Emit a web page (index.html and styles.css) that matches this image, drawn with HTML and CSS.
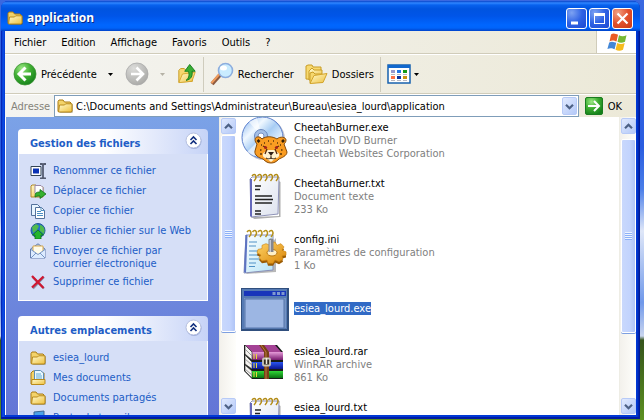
FILE: index.html
```html
<!DOCTYPE html>
<html lang="fr">
<head>
<meta charset="utf-8">
<title>application</title>
<link rel="stylesheet" href="styles.css">
</head>
<body>
<svg class="defs" width="0" height="0" aria-hidden="true">
  <defs>
    <linearGradient id="gFolder" x1="0" y1="0" x2="1" y2="1"><stop offset="0" stop-color="#fffbd0"/><stop offset="1" stop-color="#eebf3c"/></linearGradient>
    <radialGradient id="gGreen" cx=".35" cy=".25" r=".8"><stop offset="0" stop-color="#9be884"/><stop offset=".5" stop-color="#3fae32"/><stop offset="1" stop-color="#14801a"/></radialGradient>
    <radialGradient id="gGrey" cx=".35" cy=".25" r=".8"><stop offset="0" stop-color="#dcdcda"/><stop offset="1" stop-color="#a9a9a6"/></radialGradient>
    <linearGradient id="gDisc" x1="0" y1="0" x2="1" y2="1"><stop offset="0" stop-color="#7fb0ee"/><stop offset=".3" stop-color="#f0f8ff"/><stop offset=".5" stop-color="#a8cdf4"/><stop offset=".75" stop-color="#e8f4ff"/><stop offset="1" stop-color="#6f9ee0"/></linearGradient>
    <linearGradient id="gPage" x1="0" y1="0" x2="1" y2="1"><stop offset="0" stop-color="#ffffff"/><stop offset="1" stop-color="#dde2ee"/></linearGradient>
    <linearGradient id="gPageBlue" x1="0" y1="0" x2="1" y2="1"><stop offset="0" stop-color="#ffffff"/><stop offset="1" stop-color="#b5e4f6"/></linearGradient>
    <linearGradient id="gGear" x1="0" y1="0" x2="1" y2="1"><stop offset="0" stop-color="#ffd467"/><stop offset="1" stop-color="#d98508"/></linearGradient>
    <linearGradient id="gPurple" x1="0" y1="0" x2="0" y2="1"><stop offset="0" stop-color="#e69bd9"/><stop offset="1" stop-color="#76196d"/></linearGradient>
    <linearGradient id="gBlue" x1="0" y1="0" x2="0" y2="1"><stop offset="0" stop-color="#2a55f0"/><stop offset="1" stop-color="#0a1590"/></linearGradient>
    <linearGradient id="gBookGreen" x1="0" y1="0" x2="0" y2="1"><stop offset="0" stop-color="#2fd636"/><stop offset="1" stop-color="#087010"/></linearGradient>
    <symbol id="folder" viewBox="0 0 16 16">
      <path d="M2 15h13l1-1V6z" fill="#6b5a20" opacity=".45"/>
      <path d="M1 13.500V3.500l1-1.500h4l1.500 2H13l1 1v8.500z" fill="#f3d36a" stroke="#a97b14"/>
      <path d="M1.500 14l1-7h5l1.200-1.200h6.300V13l-1 1z" fill="url(#gFolder)" stroke="#b98a1c"/>
    </symbol>
    <symbol id="chevrons" viewBox="0 0 17 17">
      <circle cx="9" cy="9.500" r="7.500" fill="#6c80bd" opacity=".5"/>
      <circle cx="8.500" cy="8.500" r="7.500" fill="#fff" stroke="#b5bfde"/>
      <path d="M5.500 8l3-3 3 3M5.500 12l3-3 3 3" fill="none" stroke="#12307f" stroke-width="1.600"/>
    </symbol>
    <symbol id="up" viewBox="0 0 9 9"><path d="M1 6.200l3.500-3.500L8 6.200" fill="none" stroke="#4d6185" stroke-width="2.200"/></symbol>
    <symbol id="down" viewBox="0 0 9 9"><path d="M1 2.800l3.500 3.500L8 2.800" fill="none" stroke="#4d6185" stroke-width="2.200"/></symbol>
    <symbol id="caret" viewBox="0 0 5 3"><path d="M0 0h5L2.500 3z" fill="currentColor"/></symbol>
    <symbol id="notepad" viewBox="0 0 48 48">
      <path d="M10 45l28-1V9l1.500 1v35l-26 2z" fill="#777" opacity=".6"/>
      <path d="M9 7l2-2 27 0-1 37-27 3z" fill="url(#gPage)" stroke="#8f93b8"/>
      <path d="M9 7v37l2 1V7z" fill="#6468bb"/>
      <path d="M14 14h6M14 17.500h5M14 24h17M14 27.500h18M14 31h17M14 39h6M14 42h6" stroke="#222" stroke-width="1.400"/>
      <g fill="none" stroke="#b28b16" stroke-width="1.500"><path d="M11 4c3-4 6 1 2 5M16.500 4c3-4 6 1 2 5M22 4c3-4 6 1 2 5M27.500 4c3-4 6 1 2 5M33 4c3-4 6 1 2 5"/></g>
    </symbol>
  </defs>
</svg>

<div class="window">
  <header class="titlebar">
    <svg class="i16" aria-hidden="true"><use href="#folder"/></svg>
    <h1>application</h1>
    <button class="cap" aria-label="Réduire"><svg viewBox="0 0 19 19"><path d="M4 12.500h7v3H4z" fill="#fff"/></svg></button>
    <button class="cap" aria-label="Agrandir"><svg viewBox="0 0 19 19"><path d="M4 4h11v11H4zM5 7v7h9V7z" fill="#fff" fill-rule="evenodd"/></svg></button>
    <button class="cap close" aria-label="Fermer"><svg viewBox="0 0 19 19"><path d="M4.500 4.500l10 10M14.500 4.500l-10 10" stroke="#fff" stroke-width="2.200"/></svg></button>
  </header>

  <div class="menurow">
    <nav class="menu">
      <button>Fichier</button><button>Edition</button><button>Affichage</button><button>Favoris</button><button>Outils</button><button>?</button>
    </nav>
    <div class="brand">
      <svg viewBox="0 0 20 18" width="20" height="18" aria-hidden="true">
        <path d="M4 1.500c3-2 5 0 7 .2L9.500 8.500c-2-.4-4-1.800-7 0z" fill="#ea5a23"/>
        <path d="M12 2.300c3 1.500 5 1 7.500 0L18 8.800c-3 1.300-5 1.200-7.500 0z" fill="#76b833"/>
        <path d="M2.200 9.500c3-1.800 5-.2 7 .2l-1.600 6.600c-2-.8-4-1.800-7.200-.2z" fill="#4387d6"/>
        <path d="M10.200 10c2.500 1.200 5 1.200 7.500 0L16 16.800c-2.800 1.300-5 1.100-7.500 0z" fill="#f6bb1e"/>
      </svg>
    </div>
  </div>

  <div class="toolbar">
    <button class="tool">
      <svg viewBox="0 0 24 24" width="24" height="24" aria-hidden="true"><circle cx="12" cy="12" r="11" fill="url(#gGreen)" stroke="#3d9434" stroke-width=".8"/><path d="M12.500 5.500L6 12l6.500 6.500M6.500 12H18" fill="none" stroke="#fff" stroke-width="3"/></svg>
      <span>Précédente</span>
    </button>
    <button class="drop" aria-label="Historique précédent"><svg class="caret"><use href="#caret"/></svg></button>
    <button class="tool" aria-label="Suivante"><svg viewBox="0 0 24 24" width="24" height="24"><circle cx="12" cy="12" r="11" fill="url(#gGrey)" stroke="#aaa" stroke-width=".8"/><path d="M11.500 5.500L18 12l-6.500 6.500M17.500 12H6" fill="none" stroke="#fff" stroke-width="2.600"/></svg></button>
    <button class="drop off" aria-label="Historique suivant"><svg class="caret"><use href="#caret"/></svg></button>
    <button class="tool" aria-label="Dossier parent"><svg viewBox="0 0 22 24" width="20" height="24">
      <path d="M2 21V8l2-2h4l2 2h7v12z" fill="#f5d76e" stroke="#c5961d"/>
      <path d="M2 21.500L6 12l14-2-3.500 10z" fill="url(#gFolder)" stroke="#d5a62a"/>
      <path d="M10 19c4-3 3.500-7 2.500-10H8.500L14 1.500 20 9h-3.500c1 5-1 9-6.500 10z" fill="#39ae34" stroke="#157b1a"/>
    </svg></button>
    <span class="sep"></span>
    <button class="tool"><svg viewBox="0 0 24 24" width="24" height="24" aria-hidden="true">
      <path d="M2 22l8-9" stroke="#8d5b41" stroke-width="4"/><path d="M1.500 21l8-9" stroke="#ef9a5b" stroke-width="2"/>
      <circle cx="15.500" cy="8.500" r="7" fill="#c9ecff" stroke="#8daede" stroke-width="1.600"/><ellipse cx="13.500" cy="6" rx="3.500" ry="2.500" fill="#fff"/>
    </svg><span>Rechercher</span></button>
    <button class="tool folders"><svg viewBox="0 0 24 24" width="24" height="24" aria-hidden="true">
      <path d="M2 17V4l2-1h4l1 2h8v13z" fill="#f7d970" stroke="#c99d25"/>
      <path d="M5 18V9l3-3 2 2h8v9z" fill="url(#gFolder)" stroke="#c99d25"/>
      <path d="M6 21V11l3-1 2 2h7v8z" fill="#f5d76e" stroke="#c99d25"/>
      <path d="M6 21.500l4-8 13-2-4 9z" fill="url(#gFolder)" stroke="#d3a52c"/>
    </svg><span>Dossiers</span></button>
    <span class="sep"></span>
    <button class="tool views" aria-label="Affichage"><svg viewBox="0 0 24 20" width="24" height="20">
      <rect x="1" y="1" width="22" height="18" fill="#fff" stroke="#1762ae" stroke-width="1.500"/><path d="M1 1h22v3H1z" fill="#1268cd"/>
      <path d="M4 6h4v3H4z" fill="#99c"/><path d="M10 6h4v3h-4z" fill="#2878e6"/><path d="M16 6h4v3h-4z" fill="#159a19"/>
      <path d="M4 12h4v3H4z" fill="#ff7043"/><path d="M10 12h4v3h-4z" fill="#10349b"/><path d="M16 12h4v3h-4z" fill="#c9920e"/>
      <path d="M4 10.500h4M10 10.500h4M16 10.500h4M4 16.500h4M10 16.500h4M16 16.500h4" stroke="#b8b8c0"/>
    </svg><svg class="caret"><use href="#caret"/></svg></button>
  </div>

  <form class="address">
    <label for="path">Adresse</label>
    <div class="combo">
      <svg class="i16" aria-hidden="true"><use href="#folder"/></svg>
      <input id="path" type="text" value="C:\Documents and Settings\Administrateur\Bureau\esiea_lourd\application">
      <button type="button" class="sbtn" aria-label="Dérouler"><svg width="9" height="9"><use href="#down"/></svg></button>
    </div>
    <button type="button" class="go"><svg viewBox="0 0 18 18" width="18" height="18" aria-hidden="true"><rect x=".5" y=".5" width="17" height="17" rx="1.500" fill="url(#gGreen)" stroke="#1a7c20"/><path d="M9 4l5 5-5 5M13.500 9H3" fill="none" stroke="#fff" stroke-width="2"/></svg><span>OK</span></button>
  </form>

  <main class="content">
    <aside class="side">
      <section class="box">
        <h2><span>Gestion des fichiers</span><button aria-label="Réduire"><svg width="17" height="17"><use href="#chevrons"/></svg></button></h2>
        <ul>
          <li><a href="#"><svg class="i16" viewBox="0 0 16 16"><path d="M1 3.500h10v9H1z" fill="#fff" stroke="#345"/><path d="M3 5.500h6v5H3z" fill="#0a32b4"/><path d="M10 1h2l1 1 1-1h2M13 2v12M10 15.500h2l1-1.500 1 1.500h2" fill="none" stroke="#555d72" stroke-width="1.800"/></svg><span>Renommer ce fichier</span></a></li>
          <li><a href="#"><svg class="i16" viewBox="0 0 16 16"><path d="M1 14V3l1-1h4l2 2h5v10z" fill="url(#gFolder)" stroke="#b18828"/><path d="M5 2.500h6l2 2v6H5z" fill="#fff" stroke="#98a"/><path d="M5 14c0-4 1-5 5-5V6.500l6 4.500-6 4.500V13c-2 0-3 0-5 1z" fill="#36b12e" stroke="#13701a" stroke-width=".8"/></svg><span>Déplacer ce fichier</span></a></li>
          <li><a href="#"><svg class="i16" viewBox="0 0 16 16"><path d="M1.500 1.500h6l3 3v8h-9z" fill="#e8f4ff" stroke="#54729c"/><path d="M5.500 4.500h6l3 3v8h-9z" fill="#fff" stroke="#54729c"/><path d="M11 4.500v3h3.500M7 8.500h4M7 10.500h6M7 12.500h6" fill="none" stroke="#4c8fc3"/></svg><span>Copier ce fichier</span></a></li>
          <li><a href="#"><svg class="i16" viewBox="0 0 16 16"><circle cx="8" cy="7.500" r="7" fill="#2671cb" stroke="#245b94"/><path d="M2 4l4-3 3 2-2 4-4 3zM10 2c5 1 5 6 4 9l-4-3z" fill="#52bb4c"/><path d="M8 7l5.500 5H11v4H5v-4H2.500z" fill="#22b52b" stroke="#0c731a" stroke-width=".8"/></svg><span>Publier ce fichier sur le Web</span></a></li>
          <li><a href="#"><svg class="i16" viewBox="0 0 16 16"><path d="M.500 6L8 .8 15 6v9H.500z" fill="#b6cdec" stroke="#667fae"/><path d="M3 3h10v6l-5 3-5-3z" fill="#fffbe9" stroke="#d9a94c"/><path d="M1 6.500l7 5 7-5V15H1z" fill="#dcebff"/><path d="M1 15l5-5M15 15l-5-5M1 6.500l7 5 7-5" fill="none" stroke="#7795c5"/></svg><span>Envoyer ce fichier par courrier électronique</span></a></li>
          <li><a href="#"><svg class="i16" viewBox="0 0 16 16"><path d="M3 3.500l11 11M14 3L3 14.500" stroke="#888ba5" stroke-width="2"/><path d="M2 2l11.500 12M13.500 2.500L2 13.500" stroke="#cf1832" stroke-width="2.300"/></svg><span>Supprimer ce fichier</span></a></li>
        </ul>
      </section>
      <section class="box">
        <h2><span>Autres emplacements</span><button aria-label="Réduire"><svg width="17" height="17"><use href="#chevrons"/></svg></button></h2>
        <ul>
          <li><a href="#"><svg class="i16"><use href="#folder"/></svg><span>esiea_lourd</span></a></li>
          <li><a href="#"><svg class="i16" viewBox="0 0 16 16"><path d="M1 14V3l2-2h4l1 2h6v11z" fill="#f3d36a" stroke="#a97b14"/><path d="M4.500.500h6l3 2.500V10h-9z" fill="#e9f7ff" stroke="#5c8db5"/><path d="M6 4h5M6 6h6M6 8h6" stroke="#65abd5"/><path d="M1.500 14.500l.500-5h13v4l-1 1z" fill="url(#gFolder)" stroke="#b98a1c"/></svg><span>Mes documents</span></a></li>
          <li><a href="#"><svg class="i16"><use href="#folder"/></svg><span>Documents partagés</span></a></li>
          <li><a href="#"><svg class="i16" viewBox="0 0 16 16"><path d="M4 2l10-1v9L4 11z" fill="#4ba2e8" stroke="#3d6796"/><path d="M1 12h13v3H1z" fill="#ccd5e2" stroke="#667"/></svg><span>Poste de travail</span></a></li>
        </ul>
      </section>
    </aside>
    <div class="scroll">
      <button class="sbtn" aria-label="Monter"><svg width="9" height="9"><use href="#up"/></svg></button>
      <div class="track"><div class="thumb"><i></i></div></div>
      <button class="sbtn" aria-label="Descendre"><svg width="9" height="9"><use href="#down"/></svg></button>
    </div>

    <ul class="files">
      <li><svg viewBox="0 0 48 48" aria-hidden="true">
        <circle cx="23" cy="23" r="21" fill="#8d8d9d" opacity=".5"/>
        <circle cx="21.500" cy="21.500" r="20.500" fill="url(#gDisc)" stroke="#5b7fcc"/>
        <path d="M21 21L8 6l8-4zM21 21L6 36l7 4z" fill="#fff" opacity=".6"/>
        <circle cx="20" cy="20" r="6.500" fill="#a3bfe6" stroke="#6a87bd"/><circle cx="20" cy="20" r="3" fill="#fff" stroke="#7891c2"/>
        <path d="M14 24c0-4 5-4 7-1 4-3 10-3 15 0 3-3 9-2 9 1 0 2-1 3-2 4l3 8c0 4-6 6-8 7-3 3-5 4-8 4s-5-1-8-4c-4-1-9-4-8-8l2-7c-1-1-2-3-2-4z" fill="#f99c22" stroke="#854a08"/>
        <path d="M16.500 24l2 2M43 24l-2 2" stroke="#332008" stroke-width="2.500"/>
        <path d="M24 36c-3 1-3 6 1 6l5 4 5-4c4 0 4-5 1-6l-3-2h-6z" fill="#fff1cf"/>
        <path d="M27 36h6l-3 4z" fill="#302018"/><path d="M30 40v3M25 42c2 1 3 1 5 0 2 1 3 1 5 0" fill="none" stroke="#322010"/><path d="M22 30l4 2M38 30l-4 2M26 33l-2 5M34 33l2 5" fill="none" stroke="#5a2c10" stroke-width="1.300"/>
        <circle cx="24.500" cy="31.500" r="1.500" fill="#a8231a"/><circle cx="35.500" cy="31.500" r="1.500" fill="#a8231a"/>
        <path d="M27 25h1M32 25h1M29.500 28h1M20 29h1M39 29h1M19 34h1.500M40 34h1.500M19 38h2M39 38h2M23 27h1M36 27h1" stroke="#5b3608" stroke-width="1.400"/>
      </svg><div><b>CheetahBurner.exe</b><span>Cheetah DVD Burner</span><span>Cheetah Websites Corporation</span></div></li>
      <li><svg aria-hidden="true"><use href="#notepad"/></svg><div><b>CheetahBurner.txt</b><span>Document texte</span><span>233 Ko</span></div></li>
      <li><svg viewBox="0 0 48 48" aria-hidden="true">
        <path d="M5 46l30-2V10z" fill="#888" opacity=".6"/>
        <path d="M5 7h27v35L3 45z" fill="url(#gPageBlue)" stroke="#8890b8"/><path d="M4.500 7h2L5 45l-2-1z" fill="#5d73c2"/>
        <path d="M8 14h8M8 18h7M8 23h12M8 27h11M8 31h12M8 35h7M8 38.500h6" stroke="#4e91c6"/>
        <g fill="none" stroke="#b59118" stroke-width="1.500"><path d="M6 4c3-4 6 1 2 5M11.500 4c3-4 6 1 2 5M17 4c3-4 6 1 2 5M22.500 4c3-4 6 1 2 5M28 4c3-4 6 1 2 5"/></g>
        <g transform="translate(1 5) scale(1 .82)">
        <path d="M28 12l5-1 2 4 4-2 3 4-2 4 4 2v4l-4 1 1 4-4 3-4-2-2 4h-5l-1-4-5 1-3-4 2-3-4-3 1-4 4-1v-4l4-2 4 2z" fill="#9b5c05" transform="translate(0 3)"/>
        <path d="M28 12l5-1 2 4 4-2 3 4-2 4 4 2v4l-4 1 1 4-4 3-4-2-2 4h-5l-1-4-5 1-3-4 2-3-4-3 1-4 4-1v-4l4-2 4 2z" fill="url(#gGear)" stroke="#cc850f" stroke-width=".7"/>
        <ellipse cx="30" cy="24" rx="5" ry="4" fill="#fff0c8" stroke="#b36f0b"/></g>
        <path d="M27.500 12c0-2 5-2 5 0v12h-5z" fill="#85878f"/><path d="M28.500 12h1.500v12h-1.500z" fill="#c7c8cf"/>
      </svg><div><b>config.ini</b><span>Paramètres de configuration</span><span>1 Ko</span></div></li>
      <li class="selected"><svg viewBox="0 0 48 48" aria-hidden="true">
        <path d="M0 4h48v43H0z" fill="#304f7e"/><path d="M1 5h45v40H1z" fill="#557ab3"/><path d="M3 7h42v5H3z" fill="#1835ba"/><path d="M31.500 8h3v3h-3zM36 8h3v3h-3zM40.500 8h3v3h-3z" fill="#8099d0"/>
        <path d="M3 14h42v30H3z" fill="#7593c3"/><path d="M4 15h39v29H4z" fill="#9cb6e3" stroke="#5475aa"/>
      </svg><div><b>esiea_lourd.exe</b></div></li>
      <li><svg viewBox="0 0 48 48" aria-hidden="true">
        <path d="M3 5h33l6 7v27H11L3 31z" fill="#171b19"/>
        <path d="M4 5h30l7 8H12z" fill="#a44295"/><path d="M11 12h31v8H11z" fill="url(#gPurple)"/>
        <path d="M4 5l7 7v8l-7-6zM4 15l7 7v7l-7-5zM4 25l7 6v7l-7-7z" fill="#f5f3f0" stroke="#333" stroke-width=".7"/>
        <path d="M4 9l7 7M4 19l7 6M4 29l7 6" stroke="#999"/>
        <path d="M11 22h31v7H11z" fill="url(#gBlue)"/><path d="M11 31h31v7H11z" fill="url(#gBookGreen)"/>
        <path d="M13 14v5M15.500 14v5M13 23v5M15.500 23v5M13 32v5M15.500 32v5" stroke="#e9da38"/>
        <path d="M18 5h5l5 7v27h-5V12z" fill="#774116"/><path d="M20 5l5 7v27" fill="none" stroke="#bd7b3e"/>
        <rect x="22" y="18.500" width="7" height="7" rx="1" fill="#302820" stroke="#cbc7b8" stroke-width="1.800"/><path d="M25.500 18v6" stroke="#f1eee0" stroke-width="1.500"/>
      </svg><div><b>esiea_lourd.rar</b><span>WinRAR archive</span><span>861 Ko</span></div></li>
      <li><svg aria-hidden="true"><use href="#notepad"/></svg><div><b>esiea_lourd.txt</b><span>Document texte</span><span>1 Ko</span></div></li>
    </ul>
    <div class="scroll">
      <button class="sbtn" aria-label="Monter"><svg width="9" height="9"><use href="#up"/></svg></button>
      <div class="track main"><div class="thumb"><i></i></div></div>
      <button class="sbtn" aria-label="Descendre"><svg width="9" height="9"><use href="#down"/></svg></button>
    </div>
  </main>
</div>
</body>
</html>
```
FILE: styles.css
```css
* { box-sizing: border-box; }
body, h1, h2, ul { margin: 0; padding: 0; }
ul { list-style: none; }
svg { display: block; flex: none; }
button, input {
  font: inherit;
  color: inherit;
  background: none;
  border: 0;
  padding: 0;
  margin: 0;
}
body {
  height: 100vh;
  overflow: hidden;
  padding: 1px 4px 1px 1px;
  font: 11px/13px "DejaVu Sans Condensed", "DejaVu Sans", sans-serif;
  color: #000;
  background: linear-gradient(#3a68e0 0, #2a5de0 35%, #4a7ee8 45%, #dfe7f8 55%, #6f98ea 72%, #c9d5ef 80%, #35541c 81%, #5c9020 100%);
}
.defs { position: absolute; }
.i16 { width: 16px; height: 16px; }

.window {
  height: 100%;
  display: flex;
  flex-direction: column;
  overflow: hidden;
  padding: 0 4px 4px;
  border-radius: 7px 7px 0 0;
  background: linear-gradient(90deg, #0019a8, #0f4fe6 2px, #0038d4 4px, #0038d4 calc(100% - 3px), #00138c);
  box-shadow: inset 0 -2px #001ba2;
}
.titlebar {
  flex: none;
  height: 30px;
  margin: 0 -4px;
  padding: 4px 7px 0 6px;
  display: flex;
  align-items: center;
  gap: 2px;
  background: linear-gradient(#0a44c8 0, #2f86ff 2px, #0862ee 4px, #0054e0 8px, #0055e8 15px, #0066ff 24px, #0064fa 27px, #0043cb 30px);
}
.titlebar h1 {
  flex: 1;
  padding-left: 2px;
  font: bold 12px/18px "Noto Sans", sans-serif;
  color: #fff;
  text-shadow: 1px 1px #0a2a86;
}
.cap {
  width: 21px;
  height: 21px;
  border: 1px solid #fff;
  border-radius: 3px;
  background: radial-gradient(circle at 25% 20%, #7da2f2, #2f62e4 50%, #1c49d2);
}
.cap.close { background: radial-gradient(circle at 25% 20%, #f2a184, #e2502d 50%, #c63a16); }

.menurow {
  flex: none;
  display: flex;
  height: 23px;
  background: linear-gradient(90deg, #f4f4f2, #ece9d8);
  border-bottom: 1px solid #d0ccba;
}
.menu { flex: 1; display: flex; align-items: center; gap: 15px; padding-left: 9px; }
.brand {
  width: 40px;
  display: flex;
  align-items: center;
  justify-content: center;
  background: #fff;
  border-left: 1px solid #d0ccba;
}
.toolbar {
  flex: none;
  height: 40px;
  display: flex;
  align-items: center;
  padding-left: 8px;
  background: linear-gradient(90deg, #f4f4f1, #ece9d8);
  border-top: 1px solid #fff;
  border-bottom: 1px solid #d0ccba;
}
.tool { display: flex; align-items: center; gap: 4px; }
.drop { width: 28px; display: flex; justify-content: center; }
.drop.off { color: #b5b2a6; }
.caret { width: 5px; height: 3px; }
.sep { width: 1px; height: 35px; margin: 0 6px; background: #cfccbd; }
.folders { margin-left: 10px; }
.views { gap: 3px; }

.address {
  flex: none;
  display: flex;
  align-items: center;
  height: 23px;
  padding-right: 14px;
  border-top: 1px solid #fff;
  background: linear-gradient(90deg, #f4f4f1, #ece9d8);
}
.address label { width: 49px; padding-left: 6px; color: #85837a; }
.combo {
  flex: 1;
  display: flex;
  align-items: center;
  height: 22px;
  padding: 1px;
  border: 1px solid #7f9db9;
  background: #fff;
}
.combo .i16 { margin: 0 3px 0 1px; }
.combo input { flex: 1; min-width: 0; outline: 0; }
.go { display: flex; align-items: center; gap: 5px; margin-left: 6px; }

.sbtn {
  width: 15px;
  height: 16px;
  flex: none;
  display: flex;
  align-items: center;
  justify-content: center;
  border: 1px solid #b7caf7;
  border-radius: 2px;
  background: linear-gradient(135deg, #e1eafe, #b4c9f8);
}
.combo .sbtn { height: 18px; }

.content { flex: 1; min-height: 0; display: flex; background: #fff; }
.side {
  width: 214px;
  flex: none;
  overflow: hidden;
  padding: 12px 11px 0 12px;
  border-left: 1px solid #fff;
  background: linear-gradient(#7ba2e7, #6375d6);
}
.box { margin-bottom: 15px; color: #215dc6; }
.box h2 {
  height: 25px;
  display: flex;
  align-items: center;
  justify-content: space-between;
  padding: 3px 6px 0 12px;
  border-radius: 4px 4px 0 0;
  font-size: 11px;
  line-height: 13px;
  background: linear-gradient(90deg, #fff 45%, #c6d3f7);
}
.box h2 button { margin-bottom: 6px; }
.box ul {
  display: flex;
  flex-direction: column;
  gap: 4px;
  padding: 9px 11px 10px;
  border: 1px solid #fff;
  border-top: 0;
  background: #d6dff7;
}
.box a { display: flex; gap: 7px; color: inherit; text-decoration: none; }
.box a span { padding-top: 1px; }

.scroll {
  width: 17px;
  flex: none;
  display: flex;
  flex-direction: column;
  align-items: center;
  padding: 1px 0;
  border-left: 1px solid #eeede5;
  background: linear-gradient(90deg, #f3f1ec, #fefefb);
}
.track { flex: 1; min-height: 0; width: 15px; padding-top: 1px; }
.track.main { padding-top: 5px; }
.thumb {
  height: 75%;
  display: flex;
  align-items: center;
  justify-content: center;
  border: 1px solid #fff;
  border-radius: 2px;
  box-shadow: 0 1px #7d9fe0;
  background: linear-gradient(90deg, #c9d8fc, #c2d3fd 60%, #afc4f6);
}
.thumb i { width: 7px; height: 8px; background: repeating-linear-gradient(#eef4fe 0 1px, #8cb0f8 1px 2px); }

.files { flex: 1; min-width: 0; overflow: hidden; padding-left: 5px; }
.files li { height: 56px; display: flex; align-items: center; gap: 5px; }
.files li:first-child { margin-top: -5px; }
.files li > svg { width: 48px; height: 48px; }
.files b, .files span { display: block; font-weight: normal; }
.files span { color: #808080; }
.files .selected b { background: #316ac5; color: #fff; }
```
